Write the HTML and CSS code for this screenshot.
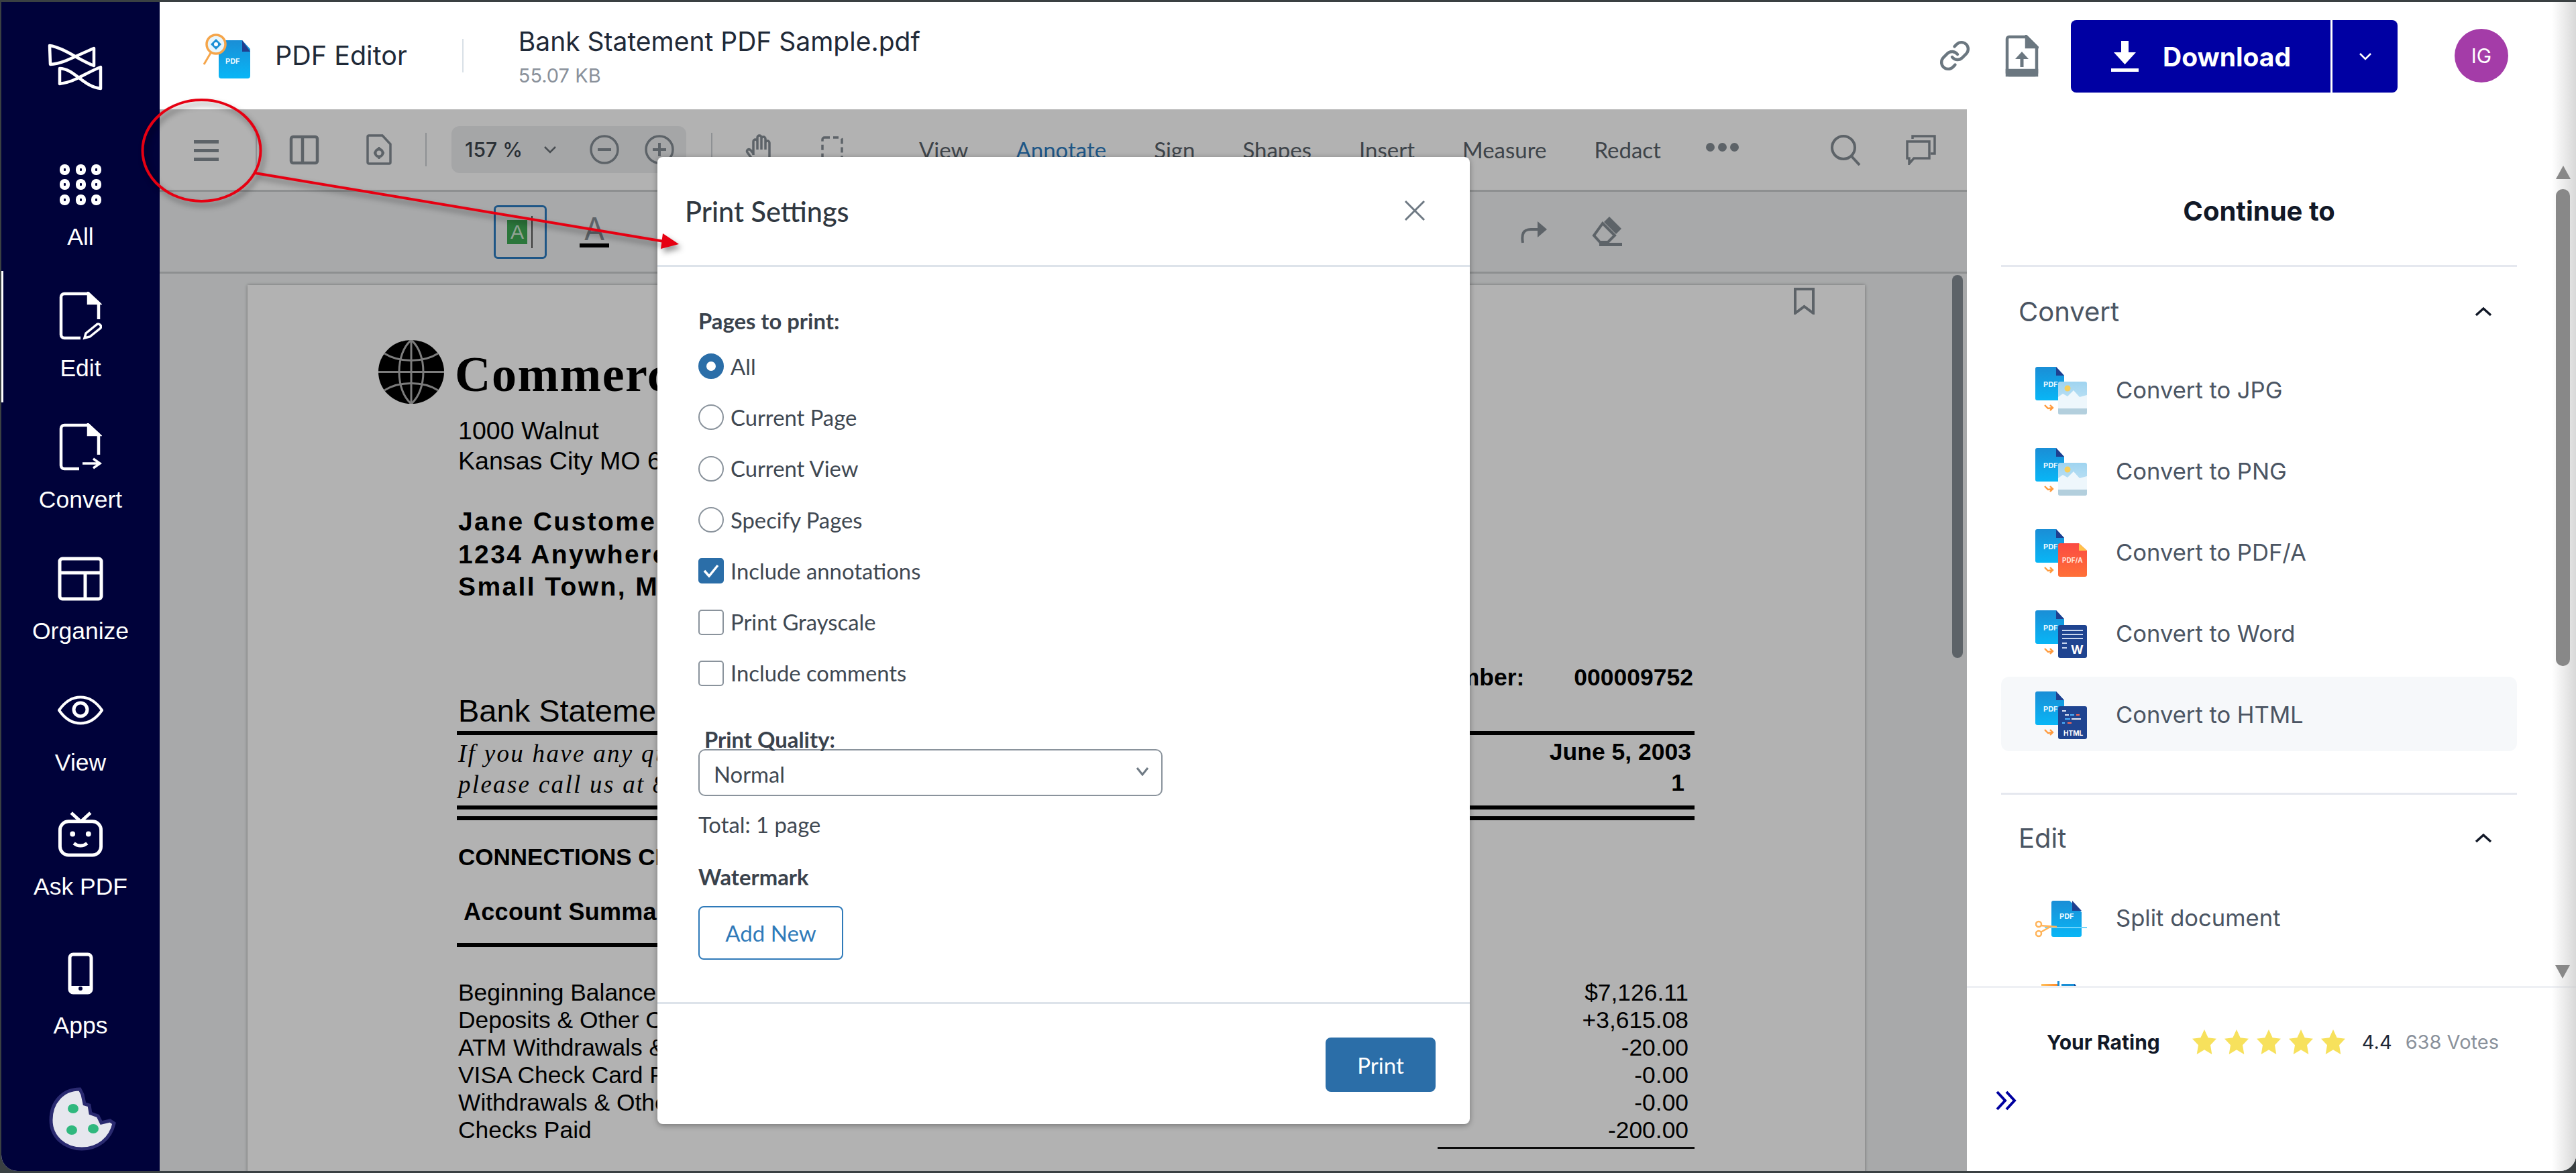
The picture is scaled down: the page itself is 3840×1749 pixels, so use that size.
FILE: index.html
```html
<!DOCTYPE html>
<html lang="en">
<head>
<meta charset="utf-8">
<title>PDF Editor</title>
<link rel="stylesheet" href="styles.css">
</head>
<body>
<svg class="defs" width="0" height="0" aria-hidden="true">
  <defs>
    <linearGradient id="blue" x1="0" y1="0" x2="0" y2="1"><stop offset="0" stop-color="#1a8ed6"/><stop offset="1" stop-color="#08b6f6"/></linearGradient>
    <linearGradient id="sky" x1="0" y1="0" x2="0" y2="1"><stop offset="0" stop-color="#9fd4f0"/><stop offset="1" stop-color="#cfe9f7"/></linearGradient>
    <linearGradient id="red" x1="0" y1="0" x2="0" y2="1"><stop offset="0" stop-color="#fb4a42"/><stop offset="1" stop-color="#ff7038"/></linearGradient>
    <linearGradient id="orange" x1="0" y1="0" x2="1" y2="0"><stop offset="0" stop-color="#ffc05a"/><stop offset="1" stop-color="#ff8a2a"/></linearGradient>
    <symbol id="base" viewBox="0 0 77 72">
      <path d="M3 0H31L43 13V47a3 3 0 0 1-3 3H3a3 3 0 0 1-3-3V3a3 3 0 0 1 3-3z" fill="url(#blue)"/>
      <path d="M31 0L43 13H31z" fill="#1f3f8f"/>
      <text x="12" y="30" class="mini">PDF</text>
      <path d="M14 57l5 5 7-1m-4-4l4 4-4 4" fill="none" stroke="#ff9a3c" stroke-width="2.4"/>
    </symbol>
    <symbol id="tile" viewBox="0 0 77 72">
      <rect x="34" y="22" width="43" height="49" rx="3" fill="url(#sky)"/>
      <path d="M34 64V45l7-5 7 4 9-9 9 10 11-3v22z" fill="#eef7fc"/>
      <path d="M34 62h43v6a3 3 0 0 1-3 3H37a3 3 0 0 1-3-3z" fill="#b3cfdd"/>
      <circle cx="48" cy="32" r="4.5" fill="#f7ce5a"/>
    </symbol>
    <symbol id="star" viewBox="0 0 36 37">
      <path d="M18 0l5.600 12.200 12.400 1.600-9 9.400L29.300 37 18 30.200 6.700 37 9 23.200 0 13.800l12.400-1.600z" fill="#f7e15c"/>
    </symbol>
  </defs>
</svg>

<div class="app">
  <aside class="rail">
    <svg class="rail-logo" viewBox="0 0 110 90" fill="none" stroke="#fff" stroke-width="4.500" stroke-linejoin="round">
      <path d="M14 13C35 16 55 33 80 43V17C60 25 35 40 15 41z"/>
      <path d="M29 47C50 47 65 75 90 77V45C65 55 50 68 29 70z"/>
    </svg>
    <nav class="rail-nav">
      <a class="rail-item">
        <span class="rail-icon">
          <svg class="i-all" viewBox="0 0 62 61" fill="none" stroke="#fff" stroke-width="6">
            <rect x="3" y="3" width="9" height="10" rx="4"/><rect x="27" y="3" width="9" height="10" rx="4"/><rect x="50" y="3" width="9" height="10" rx="4"/>
            <rect x="3" y="25" width="9" height="10" rx="4"/><rect x="27" y="25" width="9" height="10" rx="4"/><rect x="50" y="25" width="9" height="10" rx="4"/>
            <rect x="3" y="48" width="9" height="10" rx="4"/><rect x="27" y="48" width="9" height="10" rx="4"/><rect x="50" y="48" width="9" height="10" rx="4"/>
          </svg>
        </span>
        <span class="rail-label">All</span>
      </a>
      <a class="rail-item is-active">
        <span class="rail-icon">
          <svg class="i-file" viewBox="0 0 64 72" fill="none" stroke="#fff" stroke-width="4.500">
            <path d="M32 69H8a5 5 0 0 1-5-5V8a5 5 0 0 1 5-5h36l15 14v24"/>
            <path d="M44 3v14h15z" fill="#fff"/>
            <path d="M38 69l2-7 16-13a4 4 0 0 1 6 5L46 67z" stroke-width="3.500"/>
          </svg>
        </span>
        <span class="rail-label">Edit</span>
      </a>
      <a class="rail-item">
        <span class="rail-icon">
          <svg class="i-file" viewBox="0 0 64 72" fill="none" stroke="#fff" stroke-width="4.500">
            <path d="M30 68H8a5 5 0 0 1-5-5V8a5 5 0 0 1 5-5h36l15 14v30"/>
            <path d="M44 3v14h15z" fill="#fff"/>
            <path d="M35 60h26m-10-7l10 7-10 7" stroke-width="3.500"/>
          </svg>
        </span>
        <span class="rail-label">Convert</span>
      </a>
      <a class="rail-item">
        <span class="rail-icon">
          <svg class="i-org" viewBox="0 0 68 66" fill="none" stroke="#fff" stroke-width="5">
            <rect x="3" y="3" width="62" height="60" rx="4"/>
            <path d="M3 24h62M41 24v39"/>
          </svg>
        </span>
        <span class="rail-label">Organize</span>
      </a>
      <a class="rail-item">
        <span class="rail-icon">
          <svg class="i-eye" viewBox="0 0 68 48" fill="none" stroke="#fff" stroke-width="4">
            <path d="M2 24C20 -2 48 -2 66 24 48 50 20 50 2 24z"/>
            <circle cx="34" cy="23" r="10" stroke-width="5"/>
          </svg>
        </span>
        <span class="rail-label">View</span>
      </a>
      <a class="rail-item is-ask">
        <span class="rail-icon">
          <svg class="i-org" viewBox="0 0 68 69" fill="none" stroke="#fff" stroke-width="5">
            <rect x="3" y="15" width="62" height="51" rx="13"/>
            <path d="M20 2l13 12M49 2L36 14M24 48c6 5 14 5 20 0"/>
            <circle cx="22" cy="34" r="4" fill="#fff" stroke="none"/><circle cx="46" cy="34" r="4" fill="#fff" stroke="none"/>
          </svg>
        </span>
        <span class="rail-label">Ask PDF</span>
      </a>
      <a class="rail-item is-apps">
        <span class="rail-icon">
          <svg class="i-phone" viewBox="0 0 38 63" fill="none" stroke="#fff" stroke-width="5">
            <rect x="3" y="3" width="32" height="57" rx="5"/>
            <path d="M3 50h32v6a4 4 0 0 1-4 4H7a4 4 0 0 1-4-4z" fill="#fff" stroke="none"/>
            <circle cx="19" cy="54" r="3" fill="#00023a" stroke="none"/>
          </svg>
        </span>
        <span class="rail-label">Apps</span>
      </a>
    </nav>
    <svg class="cookie" viewBox="0 0 100 96">
      <path d="M46 4C20 4 3 24 3 50s21 43 46 43c24 0 43-15 48-38l-6-4-13 3-5-10-11-4-2-12-7-2-3-14z" fill="#e6e7ee" stroke="#2a2a70" stroke-width="5"/>
      <ellipse cx="36" cy="33" rx="8" ry="7" fill="#2fb87e"/><ellipse cx="34" cy="65" rx="8" ry="7" fill="#2fb87e"/><ellipse cx="66" cy="63" rx="8" ry="7" fill="#2fb87e"/>
    </svg>
  </aside>

  <div class="main">
    <header class="top">
      <svg class="app-icon" viewBox="0 0 70 68">
        <path d="M26 11H58L70 24V64a4 4 0 0 1-4 4H27a4 4 0 0 1-4-4V14a3 3 0 0 1 3-3z" fill="url(#blue)"/>
        <path d="M58 11L70 28H58z" fill="#1f3f8f"/>
        <text x="33" y="46" class="mini">PDF</text>
        <circle cx="19" cy="17" r="14" fill="#e8f6fd" stroke="#f5a54a" stroke-width="3.500"/>
        <path d="M11 30L1 47" stroke="#f5a54a" stroke-width="3"/>
        <path d="M11 17l8-8 8 8-8 8z" fill="#1b8fd6"/><circle cx="19" cy="17" r="3" fill="#fff"/>
      </svg>
      <span class="app-name">PDF Editor</span>
      <span class="top-sep"></span>
      <div class="file">
        <div class="file-name">Bank Statement PDF Sample.pdf</div>
        <div class="file-size">55.07 KB</div>
      </div>
      <div class="top-actions">
        <svg class="i-link" viewBox="0 0 24 24" fill="none" stroke="#6b7780" stroke-width="2.200" stroke-linecap="round">
          <path d="M10 13a5 5 0 0 0 7.540.54l3-3a5 5 0 0 0-7.070-7.070l-1.720 1.710"/>
          <path d="M14 11a5 5 0 0 0-7.540-.54l-3 3a5 5 0 0 0 7.070 7.070l1.710-1.710"/>
        </svg>
        <svg class="i-upload" viewBox="0 0 50 63" fill="none" stroke="#6b7780" stroke-width="4.500">
          <path d="M6 3h26l15 15v39a3 3 0 0 1-3 3H6a3 3 0 0 1-3-3V6a3 3 0 0 1 3-3z"/>
          <path d="M32 3v15h15zM3 53h44v7H3z" fill="#6b7780"/>
          <path d="M25 48V33" stroke-width="5"/><path d="M15 36l10-11 10 11z" fill="#6b7780" stroke="none"/>
        </svg>
        <div class="dl">
          <button class="dl-main">
            <svg class="i-dl" viewBox="0 0 41 46"><path d="M15 0h11v17h11L20.500 35 4 17h11z" fill="#fff"/><rect x="0" y="41" width="41" height="5" fill="#fff"/></svg>
            <span>Download</span>
          </button>
          <button class="dl-more">
            <svg class="i-chev-small" viewBox="0 0 20 12" fill="none" stroke="#fff" stroke-width="2.500"><path d="M2 2l8 8 8-8"/></svg>
          </button>
        </div>
        <span class="avatar">IG</span>
      </div>
    </header>

    <div class="work">
      <section class="viewer">
        <div class="bar-one">
          <span class="burger"><i></i><i></i><i></i></span>
          <span class="tb-sep first"></span>
          <svg class="i-panel" viewBox="0 0 45 45" fill="none" stroke="#868e96" stroke-width="4.500"><rect x="3" y="3" width="39" height="39" rx="3"/><path d="M20 3v39"/></svg>
          <svg class="i-settings" viewBox="0 0 38 46" fill="none" stroke="#868e96" stroke-width="3.500"><path d="M4 2h20l12 13v27a2 2 0 0 1-2 2H4a2 2 0 0 1-2-2V4a2 2 0 0 1 2-2z"/><circle cx="19" cy="28" r="5.500" stroke-width="4"/><path d="M19 19v3M19 34v3M11 28h3M24 28h3" stroke-width="3"/></svg>
          <span class="tb-sep second"></span>
          <div class="zoom-pill">
            <span class="zoom-val">157 %</span>
            <svg class="i-chev-zoom" viewBox="0 0 20 12" fill="none" stroke="#6b7178" stroke-width="2.500"><path d="M2 2l8 8 8-8"/></svg>
            <svg class="i-circle minus" viewBox="0 0 46 46" fill="none" stroke="#868e96" stroke-width="3.500"><circle cx="23" cy="23" r="20"/><path d="M13 23h20" stroke-width="4"/></svg>
            <svg class="i-circle plus" viewBox="0 0 46 46" fill="none" stroke="#868e96" stroke-width="3.500"><circle cx="23" cy="23" r="20"/><path d="M13 23h20M23 13v20" stroke-width="4"/></svg>
          </div>
          <span class="tb-sep"></span>
          <svg class="i-hand" viewBox="0 0 44 48" fill="none" stroke="#868e96" stroke-width="3.500"><path d="M12 32V12a3 3 0 0 1 6 0v12V6a3 3 0 0 1 6 0v18V8a3 3 0 0 1 6 0v16-10a3 3 0 0 1 6 0v20c0 8-6 13-13 13-6 0-9-3-13-9L3 28c-2-3 2-6 5-3l4 5"/></svg>
          <svg class="i-marquee" viewBox="0 0 33 40" fill="none" stroke="#868e96" stroke-width="3.500" stroke-dasharray="8 5"><rect x="2" y="2" width="29" height="36" rx="3"/></svg>
          <nav class="tabs">
            <span class="tab">View</span>
            <span class="tab is-on">Annotate</span>
            <span class="tab">Sign</span>
            <span class="tab">Shapes</span>
            <span class="tab">Insert</span>
            <span class="tab">Measure</span>
            <span class="tab">Redact</span>
            <span class="dots"><i></i><i></i><i></i></span>
          </nav>
          <svg class="i-search" viewBox="0 0 46 47" fill="none" stroke="#868e96" stroke-width="4"><circle cx="20" cy="20" r="17"/><path d="M32 33l12 13"/></svg>
          <svg class="i-comments" viewBox="0 0 46 45" fill="none" stroke="#868e96" stroke-width="3.500"><path d="M11 6V2h33v26h-6"/><path d="M3 10h33v25H13l-7 8v-8H3z"/></svg>
        </div>

        <div class="bar-two">
          <span class="tool-box">
            <span class="green-a">A</span><span class="caret"></span>
          </span>
          <span class="text-a">A</span>
          <svg class="i-undo" viewBox="0 0 46 36" fill="none" stroke="#868e96" stroke-width="4"><path d="M8 34c-2-12 0-20 12-20h20"/><path d="M30 2l14 12-14 12z" fill="#868e96" stroke="none"/></svg>
          <svg class="i-eraser" viewBox="0 0 47 45"><path d="M27 0l18 18-8 8L19 8z" fill="#868e96"/><path d="M17 10l18 18-10 10H13L4 28z" fill="none" stroke="#868e96" stroke-width="4"/><rect x="12" y="39" width="34" height="5" fill="#868e96"/></svg>
        </div>

        <div class="doc">
          <article class="page">
            <svg class="i-bookmark" viewBox="0 0 33 40" fill="none" stroke="#868e96" stroke-width="4"><path d="M3 2h27v36L16.500 28 3 38z"/></svg>
            <div class="letterhead">
              <svg class="globe" viewBox="0 0 98 95">
                <ellipse cx="49" cy="47.500" rx="49" ry="47.500" fill="#000"/>
                <g fill="none" stroke="#b2b2b2" stroke-width="3"><path d="M0 47.500h98M49 0v95"/><path d="M49 0C25 20 25 75 49 95M49 0c24 20 24 75 0 95"/><path d="M9 20c22 14 58 14 80 0M9 75c22-14 58-14 80 0"/></g>
              </svg>
              <span class="bank-name">Commerce Bank</span>
            </div>
            <div class="addr first">1000 Walnut</div>
            <div class="addr">Kansas City MO 64106</div>
            <div class="cust first">Jane Customer</div>
            <div class="cust">1234 Anywhere Dr.</div>
            <div class="cust">Small Town, MO 12345</div>
            <div class="acct"><span>Primary Account Number:</span><span>000009752</span></div>
            <div class="title">Bank Statement</div>
            <div class="ask-row"><em>If you have any questions on your account,</em><b>June 5, 2003</b></div>
            <div class="ask-row low"><em>please call us at 800-555-1234</em><b>1</b></div>
            <div class="rule-a"></div>
            <div class="rule-b"></div>
            <div class="conn">CONNECTIONS CHECKING</div>
            <div class="summary">Account Summary</div>
            <div class="rule-c"></div>
            <div class="line-row first"><span>Beginning Balance on May 3</span><span>$7,126.11</span></div>
            <div class="line-row"><span>Deposits &amp; Other Credits</span><span>+3,615.08</span></div>
            <div class="line-row"><span>ATM Withdrawals &amp; Debits</span><span>-20.00</span></div>
            <div class="line-row"><span>VISA Check Card Purchases</span><span>-0.00</span></div>
            <div class="line-row"><span>Withdrawals &amp; Other Debits</span><span>-0.00</span></div>
            <div class="line-row"><span>Checks Paid</span><span>-200.00</span></div>
            <div class="rule-d"></div>
          </article>
          <span class="doc-thumb"></span>
        </div>
      </section>

      <aside class="panel">
        <h2 class="panel-title">Continue to</h2>
        <div class="panel-scroll">
          <section class="group">
            <div class="group-head"><span>Convert</span>
              <svg class="i-up" viewBox="0 0 26 15" fill="none" stroke="#111827" stroke-width="3.500"><path d="M2 13L13 3l11 10"/></svg>
            </div>
            <div class="row">
              <svg class="tool-icon" viewBox="0 0 77 72"><use href="#base"/><use href="#tile"/></svg>
              <span>Convert to JPG</span>
            </div>
            <div class="row">
              <svg class="tool-icon" viewBox="0 0 77 72"><use href="#base"/><use href="#tile"/></svg>
              <span>Convert to PNG</span>
            </div>
            <div class="row">
              <svg class="tool-icon" viewBox="0 0 77 72"><use href="#base"/>
                <path d="M37 21H65L77 32V68a3 3 0 0 1-3 3H37a3 3 0 0 1-3-3V24a3 3 0 0 1 3-3z" fill="url(#red)"/><path d="M65 21L77 32H65z" fill="#ffc24a"/>
                <text x="40" y="50" class="mini tiny">PDF/A</text>
              </svg>
              <span>Convert to PDF/A</span>
            </div>
            <div class="row">
              <svg class="tool-icon" viewBox="0 0 77 72"><use href="#base"/>
                <rect x="34" y="22" width="43" height="49" rx="3" fill="#1f4490"/>
                <path d="M40 30h31M40 36h31M40 42h31M40 49h7M40 56h7" stroke="#c9d6ee" stroke-width="1.800"/>
                <text x="53" y="65" class="mini wide">W</text>
              </svg>
              <span>Convert to Word</span>
            </div>
            <div class="row is-hover">
              <svg class="tool-icon" viewBox="0 0 77 72"><use href="#base"/>
                <rect x="34" y="22" width="43" height="49" rx="3" fill="#1f4490"/>
                <path d="M40 29h6M44 35h6" stroke="#e2e8f5" stroke-width="1.800"/><path d="M52 35h6M44 41h8M40 47h4" stroke="#4db3ff" stroke-width="1.800"/><path d="M54 41h14" stroke="#fff" stroke-width="1.800"/><path d="M61 35h5M48 47h6" stroke="#ff6a55" stroke-width="1.800"/>
                <text x="42" y="66" class="mini tiny2">HTML</text>
              </svg>
              <span>Convert to HTML</span>
            </div>
          </section>
          <section class="group is-next">
            <div class="group-head"><span>Edit</span>
              <svg class="i-up" viewBox="0 0 26 15" fill="none" stroke="#111827" stroke-width="3.500"><path d="M2 13L13 3l11 10"/></svg>
            </div>
            <div class="row">
              <svg class="tool-icon" viewBox="0 0 77 72">
                <path d="M27 9H51L69 26V60a3 3 0 0 1-3 3H27a3 3 0 0 1-3-3V12a3 3 0 0 1 3-3z" fill="url(#blue)"/>
                <path d="M55 9L69 24H55z" fill="#1f3f8f"/>
                <text x="36" y="36" class="mini">PDF</text>
                <path d="M14 49h63" stroke="#6fd4fb" stroke-width="2"/>
                <g fill="none" stroke="#ffb45a" stroke-width="2.500"><circle cx="5" cy="44" r="4"/><circle cx="5" cy="58" r="4"/><path d="M8 46l24 2M8 56l14-8"/></g>
              </svg>
              <span>Split document</span>
            </div>
            <div class="row">
              <svg class="tool-icon" viewBox="0 0 77 72">
                <path d="M9 12h24v60H9z" fill="url(#orange)"/><path d="M33 8h3v64h-3z" fill="#1a8ed6"/>
                <path d="M39 12h20l10 14v46H39z" fill="url(#blue)"/><path d="M58 12l11 14H58z" fill="#1f3f8f"/>
              </svg>
            </div>
          </section>
        </div>
        <span class="panel-arrow up"></span>
        <span class="panel-thumb"></span>
        <span class="panel-arrow down"></span>
        <div class="rating">
          <div class="rating-row">
            <strong>Your Rating</strong>
            <div class="stars">
              <svg viewBox="0 0 36 37"><use href="#star"/></svg>
              <svg viewBox="0 0 36 37"><use href="#star"/></svg>
              <svg viewBox="0 0 36 37"><use href="#star"/></svg>
              <svg viewBox="0 0 36 37"><use href="#star"/></svg>
              <svg viewBox="0 0 36 37"><use href="#star"/></svg>
            </div>
            <span class="score">4.4</span>
            <span class="votes">638 Votes</span>
          </div>
          <svg class="i-more" viewBox="0 0 31 30" fill="none" stroke="#0000a0" stroke-width="4"><path d="M2 2l12 13L2 28M16 2l12 13-12 13"/></svg>
        </div>
      </aside>
    </div>
  </div>

  <span class="edge-shade"></span>

  <div class="dialog">
    <div class="dialog-head">
      <span class="dialog-title">Print Settings</span>
      <svg class="i-close" viewBox="0 0 32 32" fill="none" stroke="#6f7a84" stroke-width="3"><path d="M2 2l28 28M30 2L2 30"/></svg>
    </div>
    <div class="dialog-body">
      <div class="field-label">Pages to print:</div>
      <label class="opt first"><span class="radio is-on"></span>All</label>
      <label class="opt"><span class="radio"></span>Current Page</label>
      <label class="opt"><span class="radio"></span>Current View</label>
      <label class="opt"><span class="radio"></span>Specify Pages</label>
      <label class="opt"><span class="check is-on"><svg viewBox="0 0 24 20" fill="none" stroke="#fff" stroke-width="3.500"><path d="M2 10l7 8L22 2"/></svg></span>Include annotations</label>
      <label class="opt"><span class="check"></span>Print Grayscale</label>
      <label class="opt"><span class="check"></span>Include comments</label>
      <div class="quality-label">Print Quality:</div>
      <div class="select"><span>Normal</span>
        <svg class="i-chev-select" viewBox="0 0 20 14" fill="none" stroke="#6f7a84" stroke-width="3"><path d="M2 2l8 10 8-10"/></svg>
      </div>
      <div class="total">Total: 1 page</div>
      <div class="field-label mark">Watermark</div>
      <button class="btn-outline">Add New</button>
    </div>
    <div class="dialog-foot">
      <button class="btn-solid">Print</button>
    </div>
  </div>

  <svg class="markup" viewBox="0 0 1100 400" width="1100" height="400">
    <ellipse cx="300.500" cy="224.500" rx="88" ry="75.500" fill="none" stroke="#e60012" stroke-width="4"/>
    <path d="M380 258L990 360" stroke="#e60012" stroke-width="4"/>
    <path d="M1012 364L988 348 985 371z" fill="#e60012"/>
  </svg>
</div>
</body>
</html>
```

FILE: styles.css
```css
* { box-sizing: border-box; }

html, body { margin: 0; height: 100%; }

body {
  width: 3840px;
  height: 1749px;
  overflow: hidden;
  background: #3a4042;
  padding: 3px 0 3px 2px;
  font-family: "Inter", "Liberation Sans", sans-serif;
  color: #111827;
}

.defs { position: absolute; }

.mini { font: 700 11px "Inter", "Liberation Sans", sans-serif; fill: #e8f7ff; }
.mini.tiny { font-size: 10px; fill: #ffe3d9; }
.mini.tiny2 { font-size: 10px; fill: #fff; }
.mini.wide { font-size: 18px; fill: #fff; }

.app {
  position: relative;
  display: flex;
  width: 100%;
  height: 100%;
  background: #fff;
  border-radius: 0 0 24px 24px;
  overflow: hidden;
}

/* left rail */
.rail {
  flex: 0 0 236px;
  background: #00023a;
  color: #fff;
  display: flex;
  flex-direction: column;
}

.rail-logo { width: 110px; height: 90px; margin: 52px 0 0 58px; flex: none; }

.rail-nav { display: flex; flex-direction: column; margin-top: 68px; }

.rail-item {
  position: relative;
  height: 196px;
  display: flex;
  flex-direction: column;
  align-items: center;
}

.rail-item.is-active::before {
  content: "";
  position: absolute;
  left: 0;
  top: -5px;
  width: 3px;
  height: 196px;
  background: #fff;
}

.rail-item.is-ask { margin-top: -11px; }
.rail-item.is-apps { margin-top: 11px; }

.rail-icon {
  height: 120px;
  padding-top: 4px;
  display: flex;
  align-items: center;
  justify-content: center;
}

.rail-label { font: 35.500px/40px "Liberation Sans", Arial, sans-serif; }

.i-all { width: 62px; height: 61px; }
.i-file { width: 64px; height: 72px; }
.i-org { width: 68px; height: 68px; }
.i-eye { width: 68px; height: 48px; }
.i-phone { width: 38px; height: 63px; }

.cookie { width: 100px; height: 96px; margin: auto 0 30px 71px; flex: none; }

/* main */
.main { flex: 1; display: flex; flex-direction: column; min-width: 0; }

.top {
  height: 160px;
  flex: none;
  display: flex;
  align-items: center;
  padding-left: 65px;
}

.app-icon { width: 70px; height: 68px; flex: none; }
.app-name { font-size: 39.500px; margin-left: 37px; color: #1f2937; white-space: nowrap; }
.top-sep { width: 2px; height: 50px; background: #d9e0e7; margin-left: 82px; }
.file { margin-left: 82px; display: flex; flex-direction: column; }
.file-name { font-size: 39px; line-height: 50px; color: #1f2937; white-space: nowrap; margin-top: 2px; }
.file-size { font-size: 29px; line-height: 36px; margin-top: 8px; color: #8a919b; white-space: nowrap; }

.top-actions { margin-left: auto; display: flex; align-items: center; padding-right: 101px; }
.i-link { width: 48px; height: 48px; }
.i-upload { width: 50px; height: 63px; margin-left: 51px; }

.dl { display: flex; width: 487px; height: 108px; margin-left: 48px; margin-top: 2px; background: #0000a3; border-radius: 8px; color: #fff; }
.dl button { background: none; border: 0; color: inherit; font: inherit; padding: 0; display: flex; align-items: center; }
.dl .dl-main { width: 390px; padding-left: 60px; border-right: 3px solid #fff; font-weight: 700; font-size: 39px; }
.i-dl { width: 41px; height: 46px; margin-right: 36px; }
.dl .dl-more { flex: 1; justify-content: center; }
.i-chev-small { width: 20px; height: 12px; }

.avatar {
  width: 80px;
  height: 80px;
  margin-left: 85px;
  border-radius: 50%;
  background: #a43ca8;
  color: #fff;
  font-size: 30px;
  display: flex;
  align-items: center;
  justify-content: center;
}

.work { flex: 1; display: flex; min-height: 0; }

/* viewer, dimmed by the modal scrim */
.viewer {
  position: relative;
  flex: 0 0 2694px;
  display: flex;
  flex-direction: column;
  background: #f1f3f4;
  overflow: hidden;
}

.viewer::after {
  content: "";
  position: absolute;
  inset: 0;
  background: rgba(0, 0, 0, .3);
}

.bar-one {
  height: 123px;
  flex: none;
  background: #fff;
  border-bottom: 3px solid #cbcdce;
  display: flex;
  align-items: center;
  padding: 0 0 0 51px;
  color: #5a626a;
}

.burger { width: 37px; display: flex; flex-direction: column; gap: 8px; margin-top: 2px; }
.burger i { display: block; height: 5px; background: #868e96; }
.tb-sep { width: 2px; height: 50px; background: #ccd0d4; margin-left: 37px; }
.tb-sep.first { margin-left: 55px; }
.tb-sep.second { margin-left: 50px; }
.i-panel { width: 45px; height: 45px; margin-left: 48px; }
.i-settings { width: 38px; height: 46px; margin-left: 70px; }
.zoom-pill {
  width: 350px;
  height: 70px;
  margin-left: 37px;
  border-radius: 12px;
  background: #eceef0;
  display: flex;
  align-items: center;
  padding-left: 20px;
}
.zoom-val { font: 500 30px "Inter", sans-serif; color: #3c444c; width: 96px; white-space: nowrap; }
.i-chev-zoom { width: 20px; height: 12px; margin-left: 21px; }
.i-circle { width: 46px; height: 46px; }
.i-circle.minus { margin-left: 48px; }
.i-circle.plus { margin-left: 36px; }
.i-hand { width: 44px; height: 48px; margin-left: 49px; }
.i-marquee { width: 33px; height: 40px; margin-left: 69px; }

.tabs { display: flex; align-items: center; gap: 71px; margin-left: 113px; font: 33px "Lato", sans-serif; white-space: nowrap; }
.tab.is-on { color: #2c7cc0; }
.dots { display: flex; gap: 5px; margin-left: -4px; margin-top: -8px; }
.dots i { width: 13px; height: 13px; border-radius: 50%; background: #868e96; }
.i-search { width: 46px; height: 47px; margin-left: auto; }
.i-comments { width: 46px; height: 45px; margin: 0 46px 0 66px; }

.bar-two {
  height: 122px;
  flex: none;
  background: #f1f3f4;
  border-bottom: 3px solid #cbcdce;
  display: flex;
  align-items: center;
  padding: 0 513px 0 498px;
}

.tool-box {
  width: 79px;
  height: 80px;
  border: 3px solid #2c7cc0;
  border-radius: 6px;
  display: flex;
  align-items: center;
  padding-left: 17px;
  gap: 6px;
}

.green-a {
  width: 30px;
  height: 36px;
  background: #3eaa55;
  color: #cfe9d5;
  font: 30px/36px "Liberation Sans", sans-serif;
  text-align: center;
}
.caret { width: 2px; height: 48px; background: #555; }
.text-a {
  margin-left: 49px;
  width: 44px;
  height: 47px;
  border-bottom: 6px solid #000;
  color: #868e96;
  font: 46px/38px "Inter", sans-serif;
  text-align: center;
}
.i-undo { width: 46px; height: 36px; margin-left: auto; }
.i-eraser { width: 47px; height: 45px; margin-left: 64px; }

.doc { position: relative; flex: 1; padding: 17px 0 0 131px; min-height: 0; overflow: hidden; }
.doc-thumb { position: absolute; top: 2px; right: 6px; width: 16px; height: 571px; border-radius: 8px; background: #868e96; }

/* PDF page */
.page {
  position: relative;
  width: 2411px;
  height: 1400px;
  background: #fff;
  box-shadow: 0 0 5px rgba(0, 0, 0, .35);
  padding: 82px 254px 0 312px;
  color: #000;
  font-family: "Liberation Sans", Arial, sans-serif;
  white-space: nowrap;
}

.i-bookmark { position: absolute; top: 4px; right: 74px; width: 33px; height: 40px; }

.letterhead { display: flex; align-items: center; gap: 16px; height: 95px; margin-left: -117px; }
.globe { width: 98px; height: 95px; flex: none; }
.bank-name { font: 700 74px/1 "Liberation Serif", serif; letter-spacing: 1.500px; margin-top: 6px; }

.addr { font-size: 37.600px; line-height: 45px; padding-left: 2px; }
.addr.first { margin-top: 18px; }
.cust { font-size: 39px; line-height: 48.500px; font-weight: 700; letter-spacing: 2.400px; padding-left: 2px; }
.cust.first { margin-top: 44px; }

.acct { display: flex; justify-content: flex-end; gap: 74px; margin-top: 88px; height: 44px; line-height: 44px; font-size: 35.500px; font-weight: 700; padding-right: 2px; }

.title { height: 61px; padding-left: 2px; font-size: 47px; line-height: 50px; border-bottom: 6px solid #000; margin-top: 3px; }

.ask-row { display: flex; justify-content: space-between; height: 46px; line-height: 46px; margin-top: 5px; padding-right: 5px; }
.ask-row.low { margin-top: 0; padding-right: 15px; }
.ask-row em { font: italic 37px/46px "Liberation Serif", serif; letter-spacing: 2.300px; padding-left: 2px; }
.ask-row b { font-size: 35.500px; line-height: 40px; }

.rule-a { height: 6px; background: #000; margin-top: 8px; }
.rule-b { height: 6px; background: #000; margin-top: 10px; }
.conn { font-size: 35px; font-weight: 700; line-height: 44px; margin-top: 33px; padding-left: 2px; }
.summary { font-size: 36px; font-weight: 700; line-height: 44px; margin: 38px 0 0 10px; letter-spacing: .3px; }
.rule-c { width: 500px; height: 6px; background: #000; margin-top: 24px; }

.line-row { display: flex; justify-content: space-between; height: 41px; line-height: 41px; font-size: 35.400px; padding: 0 9px 0 2px; }
.line-row.first { margin-top: 48px; }
.rule-d { width: 383px; height: 3px; background: #111; margin: 4px 0 0 auto; }

/* right panel */
.panel { position: relative; flex: 1; min-width: 0; display: flex; flex-direction: column; background: #fff; }

.panel-title {
  height: 235px;
  flex: none;
  margin: 0 88px 0 51px;
  padding-top: 128px;
  border-bottom: 3px solid #e5e8ef;
  font-size: 40px;
  line-height: 48px;
  font-weight: 700;
  text-align: center;
  color: #111827;
}

.panel-scroll { flex: none; height: 1072px; overflow: hidden; padding: 0 88px 0 51px; }

.group-head {
  display: flex;
  align-items: center;
  justify-content: space-between;
  height: 40px;
  margin-top: 46px;
  padding: 0 37px 0 26px;
  font-size: 40px;
  color: #4b5563;
}

.i-up { width: 26px; height: 15px; }

.row {
  height: 111px;
  margin-top: 10px;
  padding-left: 51px;
  display: flex;
  align-items: center;
  gap: 43px;
  border-radius: 12px;
  font-size: 34.600px;
  color: #4b5563;
}
.group-head + .row { margin-top: 41px; }
.row.is-hover { background: #f6f8fa; }
.tool-icon { width: 77px; height: 72px; flex: none; margin-top: 4px; }

.group.is-next { margin-top: 62px; border-top: 3px solid #e5e8ef; }
.group.is-next .group-head { margin-top: 44px; }
.group.is-next .group-head + .row { margin-top: 43px; }

.panel-thumb { position: absolute; z-index: 2; top: 119px; right: 9px; width: 21px; height: 711px; border-radius: 10px; background: #888; }
.panel-arrow { position: absolute; z-index: 2; right: 8px; width: 0; height: 0; border: 11px solid transparent; }
.panel-arrow.up { top: 84px; border-top: 0; border-bottom: 20px solid #888; }
.panel-arrow.down { top: 1276px; right: 9px; border-bottom: 0; border-top: 20px solid #888; }

.rating { flex: 1; border-top: 3px solid #eef0f4; }
.rating-row { display: flex; align-items: center; height: 47px; margin-top: 57px; padding-left: 119px; font-size: 30px; white-space: nowrap; }
.rating-row strong { font-weight: 700; }
.stars { display: flex; gap: 12px; margin-left: 48px; }
.stars svg { width: 36px; height: 37px; }
.score { margin-left: 25px; color: #1f2937; font-size: 29px; }
.votes { margin-left: 20px; color: #8a919b; font-size: 29px; }
.i-more { display: block; width: 31px; height: 30px; margin: 49px 0 0 43px; }

.edge-shade {
  position: absolute;
  z-index: 1;
  top: 0;
  bottom: 0;
  right: 0;
  width: 36px;
  background: linear-gradient(to right, rgba(200, 200, 200, 0), rgba(200, 200, 200, .7));
}

/* dialog */
.dialog {
  position: absolute;
  z-index: 3;
  left: 978px;
  top: 231px;
  width: 1211px;
  height: 1442px;
  display: flex;
  flex-direction: column;
  background: #fff;
  border-radius: 8px;
  box-shadow: 0 2px 8px rgba(0, 0, 0, .35);
  font-family: "Lato", sans-serif;
  color: #3f4852;
}

.dialog-head {
  height: 164px;
  flex: none;
  display: flex;
  align-items: center;
  justify-content: space-between;
  padding: 0 66px 0 41px;
  border-bottom: 3px solid #dde3ea;
}
.dialog-title { font-size: 41.500px; font-weight: 500; color: #2f3740; }
.i-close { width: 32px; height: 32px; margin-top: -2px; }

.dialog-body { flex: 1; padding: 61px 0 0 61px; font-size: 32.800px; }
.field-label { font-weight: 700; line-height: 40px; font-size: 32.800px; color: #3a424c; }

.opt { display: flex; align-items: center; gap: 10px; height: 76.300px; }
.opt.first { margin-top: 9px; }

.radio { width: 38px; height: 38px; border-radius: 50%; border: 2px solid #8a939c; flex: none; }
.radio.is-on { border: 12px solid #2b6ea8; }
.check { width: 38px; height: 38px; border: 2px solid #8a939c; border-radius: 5px; flex: none; display: flex; align-items: center; justify-content: center; }
.check.is-on { background: #2b6ea8; border-color: #2b6ea8; }
.check svg { width: 24px; height: 20px; }

.quality-label { font-weight: 700; font-size: 32.800px; line-height: 28px; margin: 47px 0 0 9px; color: #3a424c; }
.select {
  width: 692px;
  height: 70px;
  border: 2.500px solid #8a939c;
  border-radius: 10px;
  display: flex;
  align-items: center;
  justify-content: space-between;
  padding: 4px 18px 0 21px;
}
.i-chev-select { width: 20px; height: 14px; margin-top: -8px; }
.total { line-height: 40px; margin-top: 23px; }
.field-label.mark { margin-top: 38px; }

.btn-outline {
  display: block;
  width: 216px;
  height: 80px;
  margin-top: 23px;
  background: #fff;
  border: 2.500px solid #2f7ab9;
  border-radius: 8px;
  color: #2f7ab9;
  font: 33px "Lato", sans-serif;
}

.dialog-foot {
  height: 182px;
  flex: none;
  border-top: 3px solid #dde3ea;
  padding: 50px 51px 0 0;
  display: flex;
  justify-content: flex-end;
  align-items: flex-start;
}
.btn-solid {
  width: 164px;
  height: 81px;
  border: 0;
  border-radius: 8px;
  background: #2b6ea8;
  color: #fff;
  font: 33px "Lato", sans-serif;
}

/* hand-drawn annotation over the screenshot */
.markup {
  position: absolute;
  z-index: 4;
  left: -2px;
  top: -3px;
  pointer-events: none;
  filter: drop-shadow(4px 6px 4px rgba(0, 0, 0, .4));
}
```
